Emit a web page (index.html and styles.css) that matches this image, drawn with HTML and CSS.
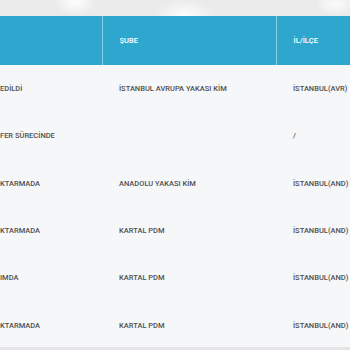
FILE: index.html
```html
<!DOCTYPE html>
<html lang="tr">
<head>
<meta charset="utf-8">
<title>Gönderi Hareketleri</title>
<link rel="stylesheet" href="styles.css">
</head>
<body>
<div class="topbar"></div>
<div class="wrap">
<table class="moves">
  <thead>
    <tr><th class="c1">DURUM</th><th class="c2">ŞUBE</th><th class="c3">İL/İLÇE</th></tr>
  </thead>
  <tbody>
    <tr><td class="c1">EDİLDİ</td><td class="c2">İSTANBUL AVRUPA YAKASI KİM</td><td class="c3">İSTANBUL(AVR)</td></tr>
    <tr><td class="c1">FER SÜRECİNDE</td><td class="c2"></td><td class="c3">/</td></tr>
    <tr><td class="c1">KTARMADA</td><td class="c2">ANADOLU YAKASI KİM</td><td class="c3">İSTANBUL(AND)</td></tr>
    <tr><td class="c1">KTARMADA</td><td class="c2">KARTAL PDM</td><td class="c3">İSTANBUL(AND)</td></tr>
    <tr><td class="c1">IMDA</td><td class="c2">KARTAL PDM</td><td class="c3">İSTANBUL(AND)</td></tr>
    <tr><td class="c1">KTARMADA</td><td class="c2">KARTAL PDM</td><td class="c3">İSTANBUL(AND)</td></tr>
  </tbody>
</table>
</div>
<div class="bottombar"></div>
</body>
</html>
```
FILE: styles.css
```css
html, body {
  margin: 0;
  padding: 0;
  width: 350px;
  height: 350px;
  overflow: hidden;
  background: #f6f7f9;
  font-family: Roboto, "Liberation Sans", sans-serif;
}
.topbar {
  height: 16px;
  background:
    radial-gradient(ellipse 22px 14px at 75px 2px, rgba(255,255,255,0.9), rgba(255,255,255,0) 100%),
    radial-gradient(ellipse 30px 16px at 185px 16px, rgba(255,255,255,0.9), rgba(255,255,255,0) 100%),
    radial-gradient(ellipse 20px 12px at 335px 4px, rgba(255,255,255,0.8), rgba(255,255,255,0) 100%),
    #ebebeb;
}
.wrap {
  height: 331px;
  overflow: hidden;
}
.moves {
  border-collapse: collapse;
  table-layout: fixed;
  width: 486px;
  margin-left: -60px;
}
.moves th,
.moves td {
  box-sizing: border-box;
  white-space: nowrap;
  overflow: hidden;
  text-transform: uppercase;
  text-align: left;
  padding: 0 0 0 17px;
}
.moves th {
  height: 49px;
  background: #2fa6cd;
  color: #fff;
  font-weight: 500;
  font-size: 7.6px;
  border-left: 1px solid #86cfe7;
}
.moves td {
  height: 47.33px;
  font-size: 7.5px;
  font-weight: 500;
  color: #505050;
}
.moves .c1 { width: 162px; padding-left: 60px; border-left: 0; }
.moves th.c1 { padding-left: 32px; }
.moves .c2 { width: 174px; }
.moves .c3 { width: 150px; }
.bottombar {
  height: 3px;
  background: #e4e4e6;
}
```
